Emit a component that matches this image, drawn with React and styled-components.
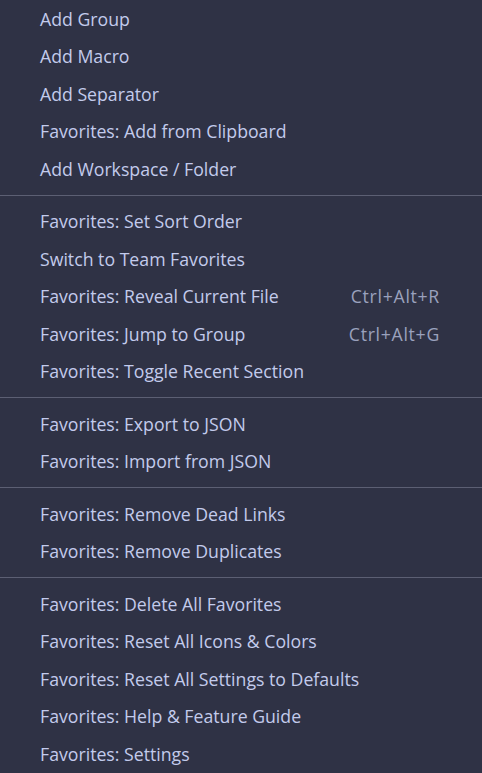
import React from "react";
import styled, { createGlobalStyle } from "styled-components";

const GlobalStyle = createGlobalStyle`
  html, body {
    margin: 0;
    padding: 0;
    background: #2f3245;
  }
  body {
    font-family: "Open Sans", "Noto Sans", sans-serif;
  }
`;

const Menu = styled.ul`
  list-style: none;
  margin: 0;
  padding: 0;
  width: 482px;
  background: #2f3245;
`;

const Item = styled.li`
  display: flex;
  align-items: center;
  justify-content: space-between;
  height: 37.5px;
  padding: 0 42px 0 40px;
  box-sizing: border-box;
  font-size: 17.7px;
  color: #c3cbec;
  white-space: nowrap;
  cursor: default;
`;

const Shortcut = styled.span`
  color: #9aa1bd;
  letter-spacing: 0.7px;
`;

const Separator = styled.li`
  height: 15px;
  display: flex;
  align-items: center;

  &::after {
    content: "";
    display: block;
    width: 100%;
    height: 1px;
    background: #5c5f73;
  }
`;

const groups = [
  [
    { label: "Add Group" },
    { label: "Add Macro" },
    { label: "Add Separator" },
    { label: "Favorites: Add from Clipboard" },
    { label: "Add Workspace / Folder" },
  ],
  [
    { label: "Favorites: Set Sort Order" },
    { label: "Switch to Team Favorites" },
    { label: "Favorites: Reveal Current File", keys: "Ctrl+Alt+R" },
    { label: "Favorites: Jump to Group", keys: "Ctrl+Alt+G" },
    { label: "Favorites: Toggle Recent Section" },
  ],
  [
    { label: "Favorites: Export to JSON" },
    { label: "Favorites: Import from JSON" },
  ],
  [
    { label: "Favorites: Remove Dead Links" },
    { label: "Favorites: Remove Duplicates" },
  ],
  [
    { label: "Favorites: Delete All Favorites" },
    { label: "Favorites: Reset All Icons & Colors" },
    { label: "Favorites: Reset All Settings to Defaults" },
    { label: "Favorites: Help & Feature Guide" },
    { label: "Favorites: Settings" },
  ],
];

export default function App() {
  return (
    <>
      <GlobalStyle />
      <Menu>
        {groups.map((group, gi) => (
          <React.Fragment key={gi}>
            {gi > 0 && <Separator />}
            {group.map((item) => (
              <Item key={item.label}>
                <span>{item.label}</span>
                {item.keys && <Shortcut>{item.keys}</Shortcut>}
              </Item>
            ))}
          </React.Fragment>
        ))}
      </Menu>
    </>
  );
}
